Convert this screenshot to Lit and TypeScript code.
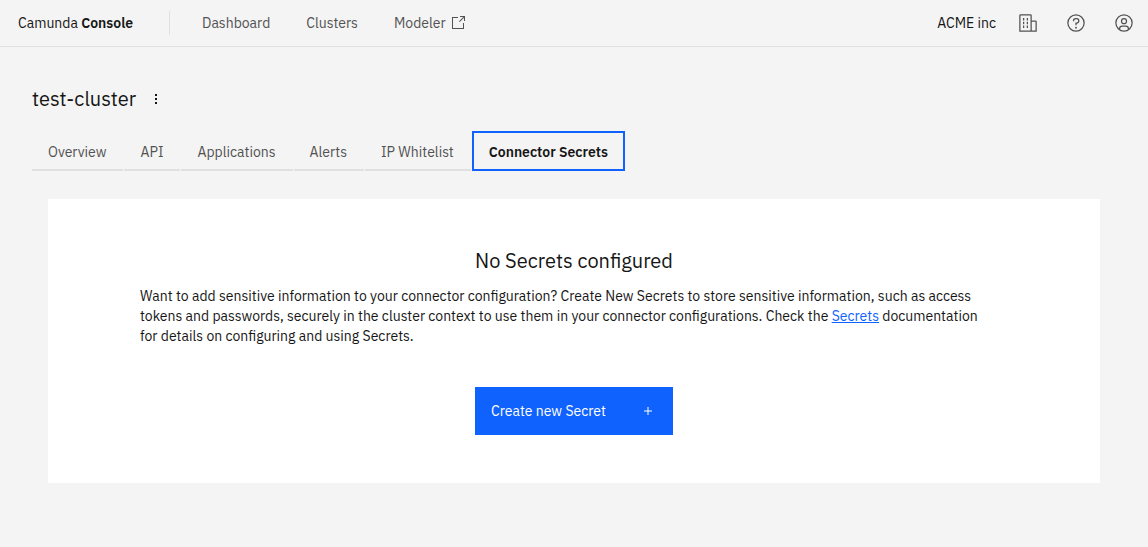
import { LitElement, html, css, svg } from "lit";
import { customElement, state } from "lit/decorators.js";

const TABS = [
  { id: "overview", label: "Overview" },
  { id: "api", label: "API" },
  { id: "applications", label: "Applications" },
  { id: "alerts", label: "Alerts" },
  { id: "whitelist", label: "IP Whitelist" },
  { id: "secrets", label: "Connector Secrets" },
];

const launchIcon = svg`
  <path d="M2 2h6v1H3v10h10V8h1v6H2z"/>
  <path d="M10 1v1h3.300L9 6.300l.7.7L14 2.700V6h1V1z"/>`;
const buildingIcon = svg`
  <path d="M8 8h2v4H8zM8 14h2v4H8zM14 8h2v4h-2zM14 14h2v4h-2zM8 20h2v4H8zM14 20h2v4h-2z"/>
  <path d="M30 14a2 2 0 0 0-2-2H22V4a2 2 0 0 0-2-2H4A2 2 0 0 0 2 4V30H30ZM4 4H20V28H4ZM22 28V14h6V28Z"/>`;
const helpIcon = svg`
  <path d="M16 2A14 14 0 1 0 30 16 14 14 0 0 0 16 2Zm0 26A12 12 0 1 1 28 16 12 12 0 0 1 16 28Z"/>
  <circle cx="16" cy="23.500" r="1.500"/>
  <path d="M17 8H15.500A4.490 4.490 0 0 0 11 12.500V13h2v-.5A2.500 2.500 0 0 1 15.500 10H17a2.500 2.500 0 0 1 0 5H15v4.500h2V17a4.500 4.500 0 0 0 0-9Z"/>`;
const userIcon = svg`
  <path d="M16 8a5 5 0 1 0 5 5A5 5 0 0 0 16 8Zm0 8a3 3 0 1 1 3-3A3 3 0 0 1 16 16Z"/>
  <path d="M16 2A14 14 0 1 0 30 16 14 14 0 0 0 16 2ZM10 26.376V25a3 3 0 0 1 3-3h6a3 3 0 0 1 3 3v1.376a11.900 11.900 0 0 1-12 0Zm13.992-1.450A5 5 0 0 0 19 20H13a5 5 0 0 0-4.992 4.926 12 12 0 1 1 15.985 0Z"/>`;

@customElement("app-root")
export class AppRoot extends LitElement {
  @state() private active = "secrets";

  static styles = css`
    :host {
      display: block;
      min-height: 100vh;
      background: #f4f4f4;
      color: #161616;
      font-family: "IBM Plex Sans", Roboto, "Liberation Sans", sans-serif;
      font-size: 14px;
      line-height: 20px;
    }
    * { box-sizing: border-box; }
    button {
      border: 0;
      padding: 0;
      background: none;
      color: inherit;
      font: inherit;
      cursor: pointer;
    }
    svg { display: block; fill: currentColor; }
    .header {
      display: flex;
      align-items: center;
      height: 47px;
      border-bottom: 1px solid #e0e0e0;
    }
    .brand {
      width: 169px;
      padding-left: 18px;
      color: inherit;
      text-decoration: none;
    }
    .brand strong { font-weight: 600; }
    .nav {
      display: flex;
      align-items: center;
      gap: 36px;
      height: 24px;
      padding-left: 32px;
      border-left: 1px solid #e0e0e0;
    }
    .nav a {
      display: flex;
      align-items: center;
      gap: 4px;
      color: #525252;
      text-decoration: none;
    }
    .actions {
      display: flex;
      align-items: center;
      margin-left: auto;
    }
    .org { padding-right: 8px; }
    .action {
      display: grid;
      place-items: center;
      width: 48px;
      height: 46px;
      color: #525252;
    }
    .main { padding: 40px 32px 64px; }
    .heading { display: flex; align-items: center; gap: 12px; }
    h1, h2 {
      margin: 0;
      font-size: 20px;
      line-height: 24px;
      font-weight: 400;
    }
    .menu { width: 16px; height: 24px; }
    .menu svg { margin: auto; }
    .tabs {
      display: flex;
      gap: 1px;
      margin-top: 20px;
    }
    .tab {
      height: 40px;
      padding: 4px 17px 0 16px;
      border-bottom: 2px solid #e0e0e0;
      color: #525252;
      white-space: nowrap;
    }
    .tab.selected {
      padding: 2px 15px 0;
      border: 2px solid #0f62fe;
      color: #161616;
      font-weight: 600;
    }
    .panel {
      display: flex;
      flex-direction: column;
      align-items: center;
      margin: 28px 16px 0;
      padding: 50px 92px 48px;
      background: #fff;
    }
    .panel p { margin: 13px 0 41px; padding-right: 16px; }
    .panel p a { color: #0f62fe; }
    .create {
      display: flex;
      align-items: center;
      justify-content: space-between;
      width: 198px;
      height: 48px;
      padding: 0 17px 0 16px;
      background: #0f62fe;
      color: #fff;
    }
  `;

  private icon(shape: unknown, size: number, grid: number) {
    return html`<svg width=${size} height=${size} viewBox="0 0 ${grid} ${grid}" aria-hidden="true">${shape}</svg>`;
  }

  render() {
    return html`
      <header class="header">
        <a class="brand" href="#">Camunda <strong>Console</strong></a>
        <nav class="nav" aria-label="Main">
          <a href="#dashboard">Dashboard</a>
          <a href="#clusters">Clusters</a>
          <a href="#modeler">Modeler ${this.icon(launchIcon, 16, 16)}</a>
        </nav>
        <div class="actions">
          <span class="org">ACME inc</span>
          <button class="action" aria-label="Organization">${this.icon(buildingIcon, 20, 32)}</button>
          <button class="action" aria-label="Help">${this.icon(helpIcon, 20, 32)}</button>
          <button class="action" aria-label="Account">${this.icon(userIcon, 20, 32)}</button>
        </div>
      </header>
      <main class="main">
        <div class="heading">
          <h1>test-cluster</h1>
          <button class="menu" aria-label="Cluster options">
            ${this.icon(svg`<path d="M7 3h2v2H7zM7 7h2v2H7zM7 11h2v2H7z"/>`, 16, 16)}
          </button>
        </div>
        <div class="tabs" role="tablist">
          ${TABS.map(
            (tab) => html`<button
              class="tab ${tab.id === this.active ? "selected" : ""}"
              role="tab"
              aria-selected=${tab.id === this.active}
              @click=${() => (this.active = tab.id)}
            >${tab.label}</button>`
          )}
        </div>
        <section class="panel" role="tabpanel">
          <h2>No Secrets configured</h2>
          <p>
            Want to add sensitive information to your connector configuration? Create New Secrets to
            store sensitive information, such as access tokens and passwords, securely in the cluster
            context to use them in your connector configurations. Check the
            <a href="#secrets">Secrets</a> documentation for details on configuring and using Secrets.
          </p>
          <button class="create">
            Create new Secret
            ${this.icon(svg`<path d="M8.500 7.500V4h-1v3.500H4v1h3.500V12h1V8.500H12v-1z"/>`, 16, 16)}
          </button>
        </section>
      </main>
    `;
  }
}
